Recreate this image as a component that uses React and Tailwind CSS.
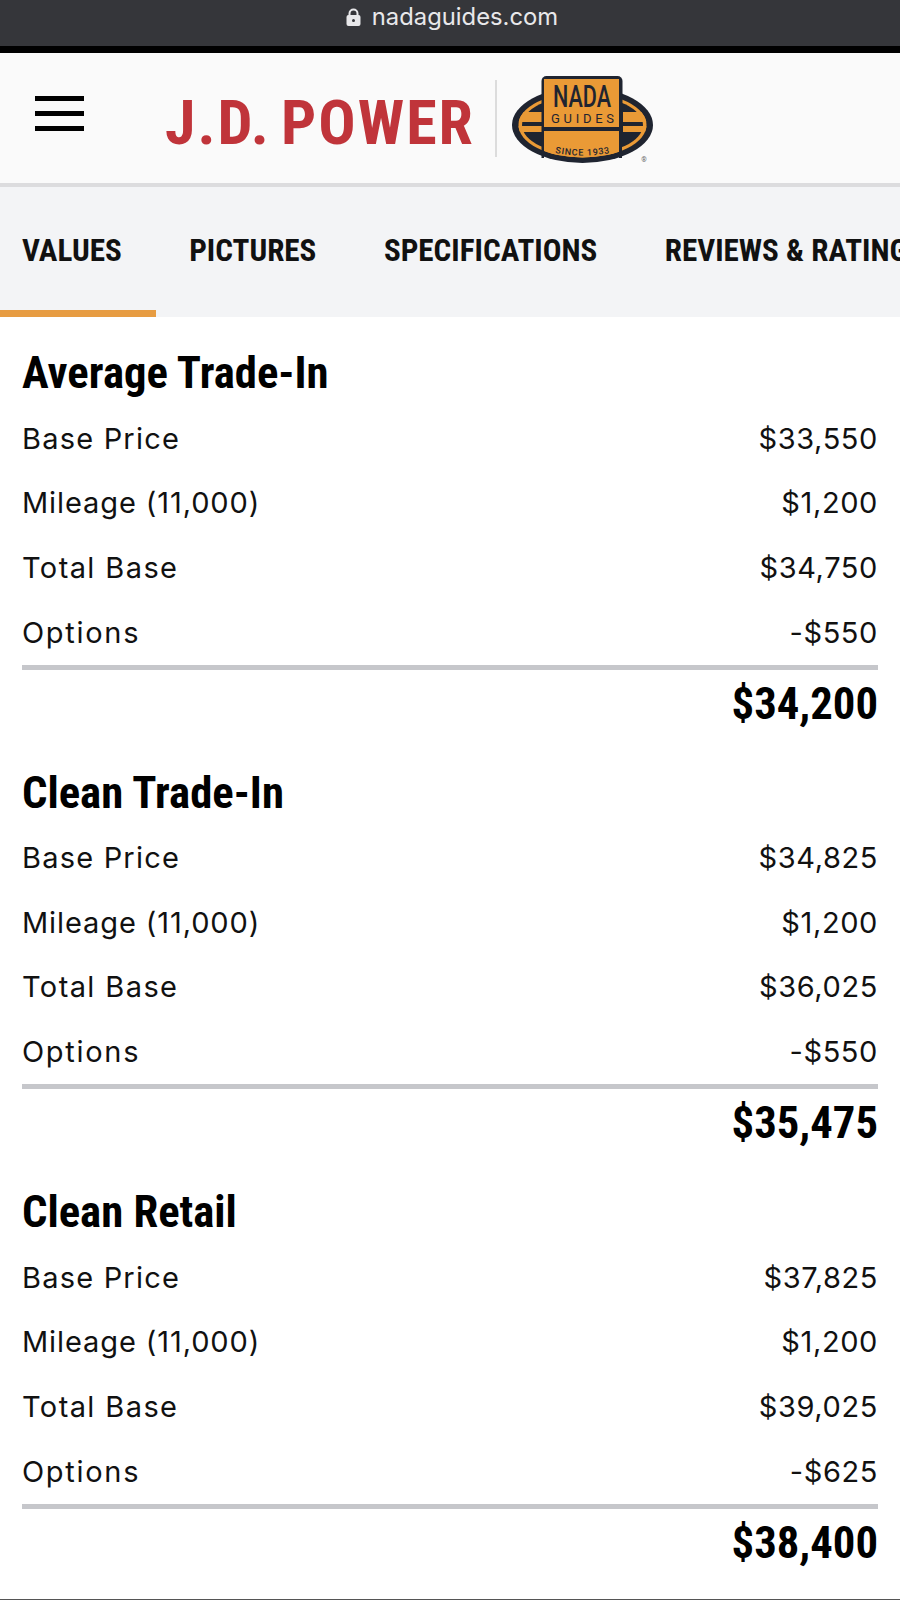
const sections = [
    { title: 'Average Trade-In', base: '$33,550', total: '$34,750', options: '-$550', value: '$34,200' },
    { title: 'Clean Trade-In', base: '$34,825', total: '$36,025', options: '-$550', value: '$35,475' },
    { title: 'Clean Retail', base: '$37,825', total: '$39,025', options: '-$625', value: '$38,400' },
];

const LockIcon = () => (
    <svg width="15" height="18" viewBox="0 0 15 18">
        <path d="M3.5 8V5.5a4 4 0 0 1 8 0V8" fill="none" stroke="#e8e8ea" strokeWidth="2" />
        <rect x="0.5" y="7" width="14" height="11" rx="2" fill="#e8e8ea" />
        <circle cx="7.5" cy="12.5" r="1.5" fill="#35363a" />
    </svg>
);

const NadaLogo = () => (
    <svg width="141" height="88" viewBox="0 0 141 88">
        <defs>
            <clipPath id="ring">
                <ellipse cx="70.5" cy="49" rx="64" ry="32.5" />
            </clipPath>
        </defs>
        <ellipse cx="70.5" cy="49" rx="70.5" ry="38" fill="#1f2430" />
        <ellipse cx="70.5" cy="49" rx="64" ry="32.5" fill="#ea9a36" />
        <ellipse cx="70.5" cy="49" rx="60.5" ry="29.5" fill="#1f2430" />
        <g clipPath="url(#ring)" fill="#ea9a36">
            <rect x="0" y="36" width="30" height="10" />
            <rect x="0" y="50" width="30" height="6" />
            <rect x="111" y="36" width="30" height="10" />
            <rect x="111" y="50" width="30" height="6" />
            <rect x="32" y="55" width="75" height="30" />
        </g>
        <path d="M29.5 5a5 5 0 0 1 5-5h71a5 5 0 0 1 5 5v50h-81z" fill="#1f2430" />
        <rect x="32" y="3" width="75" height="48" fill="#ea9a36" />
        <rect x="29.5" y="55" width="2.5" height="27" fill="#1f2430" />
        <rect x="107" y="55" width="3" height="27" fill="#1f2430" />
        <text x="41" y="31" fill="#1f2430" fontFamily="Roboto" fontSize="31" fontWeight="500" textLength="58" lengthAdjust="spacingAndGlyphs">NADA</text>
        <text x="39" y="47" fill="#1f2430" fontFamily="Roboto" fontSize="13" textLength="63">GUIDES</text>
        <path id="since" d="M43 77 Q70 82 98 77" fill="none" />
        <text fill="#1f2430" fontFamily="Roboto" fontSize="9" fontWeight="500">
            <textPath href="#since" textLength="55">SINCE 1933</textPath>
        </text>
        <text x="132" y="86" textAnchor="middle" fill="#666" fontFamily="Roboto" fontSize="7">®</text>
    </svg>
);

const Row = ({ label, value, labelClass }) => (
    <div className="flex justify-between items-center h-[64.7px] text-[29px] text-[#111] font-['Inter',sans-serif]">
        <span className={labelClass}>{label}</span>
        <span className="tracking-[0.6px]">{value}</span>
    </div>
);

export default function App() {
    return (
        <div className="h-[1600px] overflow-hidden bg-white flex flex-col font-['Roboto',sans-serif]">
            <div className="h-[46px] bg-[#35363a] flex items-center justify-center gap-[11px] pb-[12px] pl-[4px] text-[23.8px] text-[#e8e8ea] shrink-0 font-['Inter',sans-serif]">
                <LockIcon />
                <span>nadaguides.com</span>
            </div>
            <div className="h-[7px] bg-black shrink-0" />
            <div className="h-[130px] bg-[#fafafa] flex items-center pl-[35px] shrink-0">
                <div className="w-[49px] mb-[10px] flex flex-col gap-[10px]">
                    <div className="h-[5px] bg-black" />
                    <div className="h-[5px] bg-black" />
                    <div className="h-[5px] bg-black" />
                </div>
                <div className="ml-[81px] mt-[9px] w-[306px] text-[62px] font-bold text-[#c0343a] [font-stretch:85%] [word-spacing:-6px] tracking-[2px] leading-none whitespace-nowrap">J.D. POWER</div>
                <div className="ml-[24px] w-[2px] h-[77px] bg-[#dcdcdc]" />
                <div className="ml-[15px] mt-[3px]"><NadaLogo /></div>
            </div>
            <div className="h-[4px] bg-[#dcdcde] shrink-0" />
            <div className="h-[130px] bg-[#f3f4f6] shrink-0 relative flex items-center pl-[22px] pb-[2px] gap-[67.5px] whitespace-nowrap overflow-hidden text-[31.1px] font-bold text-[#111] [font-stretch:75%]">
                <span>VALUES</span>
                <span>PICTURES</span>
                <span>SPECIFICATIONS</span>
                <span>REVIEWS &amp; RATINGS</span>
                <div className="absolute left-0 bottom-0 w-[156px] h-[7px] bg-[#e79c42]" />
            </div>
            <div className="flex-1 min-h-0 overflow-hidden px-[22px] pt-[33px]">
                {sections.map((s) => (
                    <div key={s.title} className="h-[419.5px]">
                        <h2 className="text-[44.7px] leading-[46px] font-bold text-black [font-stretch:75%]">{s.title}</h2>
                        <div className="pt-[10px]">
                            <Row label="Base Price" value={s.base} labelClass="tracking-[1.2px]" />
                            <Row label="Mileage (11,000)" value="$1,200" labelClass="tracking-[0.9px]" />
                            <Row label="Total Base" value={s.total} labelClass="tracking-[1.4px]" />
                            <Row label="Options" value={s.options} labelClass="tracking-[1.7px]" />
                        </div>
                        <div className="h-[5px] bg-[#c6c7cb]" />
                        <div className="text-right text-[44.7px] leading-[46px] mt-[11px] font-bold text-black [font-stretch:75%]">{s.value}</div>
                    </div>
                ))}
            </div>
            <div className="h-px bg-[#555] shrink-0" />
        </div>
    );
}
